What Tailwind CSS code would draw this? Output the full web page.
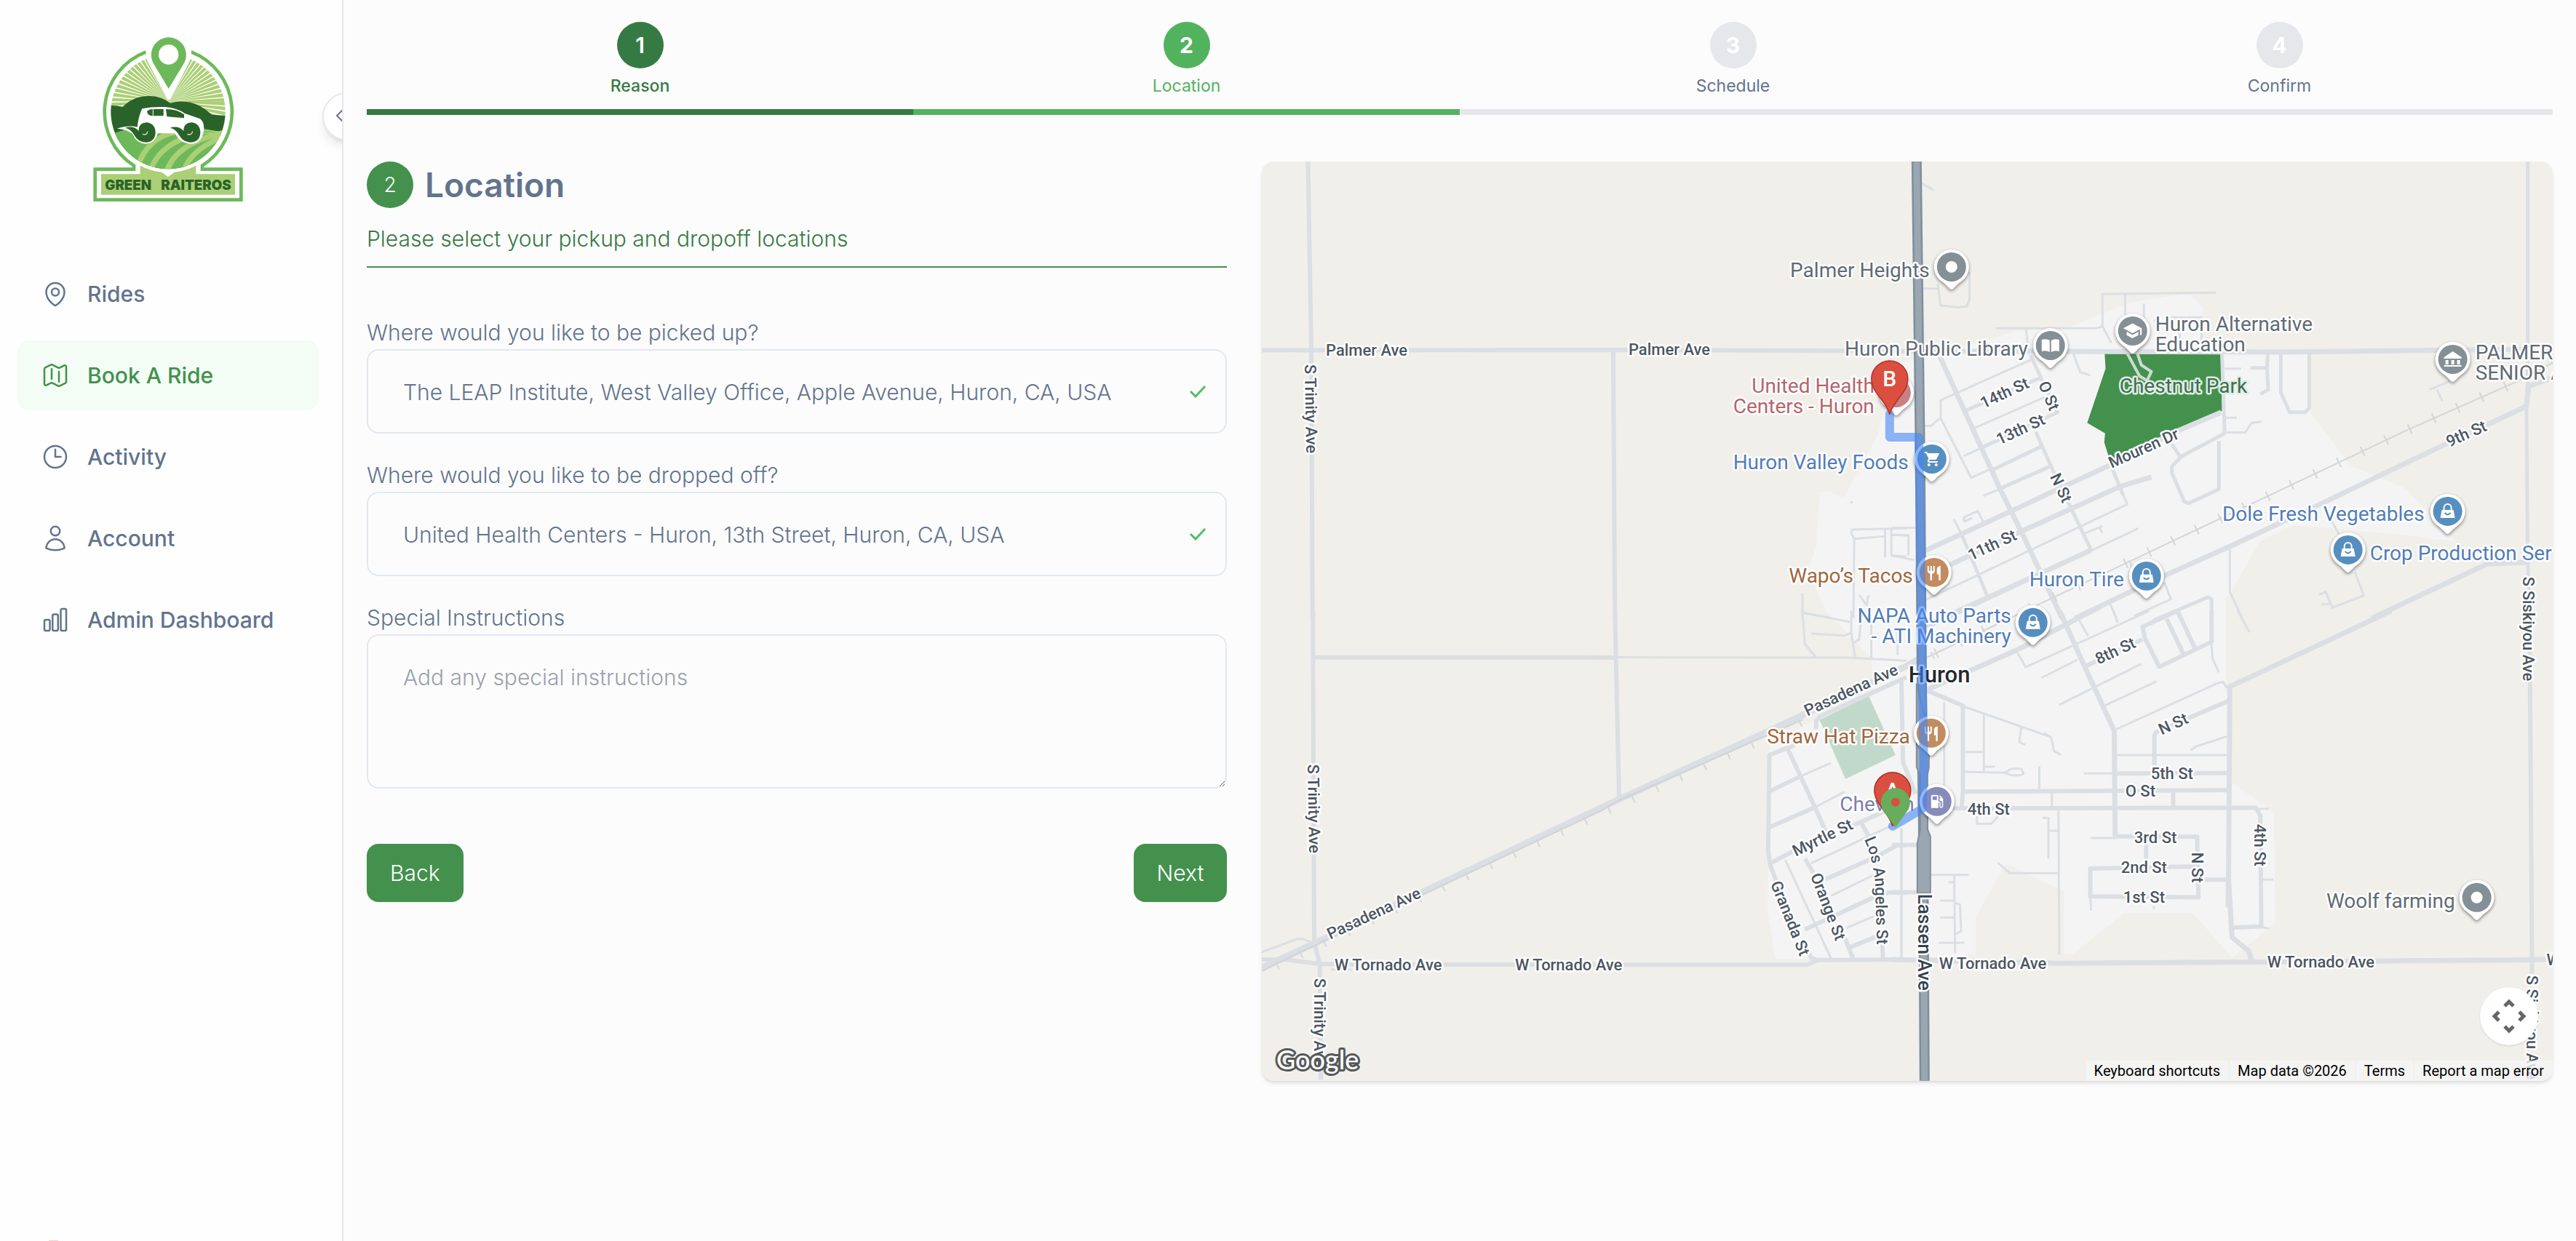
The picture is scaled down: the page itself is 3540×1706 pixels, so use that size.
<!DOCTYPE html>
<html lang="en">
<head>
<meta charset="utf-8">
<meta name="viewport" content="width=device-width, initial-scale=1">
<title>Book A Ride - Green Raiteros</title>
<script src="https://cdn.jsdelivr.net/npm/@tailwindcss/browser@4"></script>
</head>
<body class="flex min-h-screen bg-[#fcfcfc] font-['Inter',sans-serif] text-[30px] text-slate-500">

<aside class="relative flex w-[472px] shrink-0 flex-col overflow-hidden border-r-2 border-[#e5e7eb] bg-[#fefefe]">
  <a href="#" aria-label="Green Raiteros" class="ml-32 mt-[50px] block w-[206px]">
    <svg viewBox="84 60 618 682" class="block w-full">
      <defs>
        <clipPath id="disc"><circle cx="393" cy="371" r="236"/></clipPath>
      </defs>
      <path d="M302 124A264 264 0 0 0 252 593V608H92V734H694V608H534V593A264 264 0 0 0 488 124" fill="none" stroke="#6db95a" stroke-width="14"/>
      <path d="M117 628H278V592L393 600L508 592V628H669V713H117Z" fill="#abcf75"/>
      <path d="M340 600L393 640L446 600Z" fill="#fff"/>
      <circle cx="393" cy="371" r="250" fill="#fff"/>
      <g clip-path="url(#disc)">
        <circle cx="395" cy="330" r="135" fill="none" stroke="#abcf75" stroke-width="270" stroke-dasharray="8.6 3.2"/>
        <path d="M150 345Q185 345 205 351Q250 306 315 306Q365 306 402 335Q480 315 545 360L574 383L640 388V620H150Z" fill="#2a632a"/>
        <path d="M150 470Q240 420 350 459H540L640 470V620H150Z" fill="#6db95a"/>
        <path d="M540 440Q600 450 640 470V500H440Z" fill="#6db95a"/>
        <g fill="none" stroke="#abcf75" stroke-width="22">
          <path d="M270 590Q310 480 420 455"/>
          <path d="M325 600Q370 495 520 462"/>
          <path d="M390 610Q430 500 620 458"/>
          <path d="M460 610Q490 520 640 466"/>
        </g>
        <path d="M540 450Q590 448 625 462M540 460Q580 456 620 462" fill="none" stroke="#abcf75" stroke-width="5"/>
      </g>
      <path d="M302 100V150L390 320H402L488 150V100Z" fill="#fff"/>
      <path fill-rule="evenodd" d="M395 276L332 170A72 72 0 1 1 459 170ZM395 94A41 41 0 1 0 395 176A41 41 0 1 0 395 94Z" fill="#6db95a"/>
      <path d="M266 434Q272 385 286 358Q330 349 380 351Q430 355 462 378L525 400Q544 415 540 450Q532 500 490 503Q455 503 435 480L420 460H350Q338 503 300 503Q262 500 250 468Q235 445 182 440Q235 425 266 434Z" fill="#fff"/>
      <path d="M306 369Q315 360 330 360H374V388H330Q308 388 306 369ZM384 360Q430 360 459 382V397L388 391Z" fill="#2a632a"/>
      <path d="M331 360V388" stroke="#fff" stroke-width="3"/>
      <path id="wheel" d="M216 437Q250 426 272 450Q270 418 305 415Q341 420 341 458Q338 496 300 497Q268 495 254 468Q240 442 216 437Z" fill="#2a632a"/>
      <use href="#wheel" x="185"/>
      <path d="M288 463Q306 470 308 452M472 463Q490 470 494 452" fill="none" stroke="#d6e6d0" stroke-width="4"/>
      <g fill="#2a632a" class="font-['Inter'] text-[56px] font-black">
        <text x="133" y="692">GREEN</text>
        <text x="653" y="692" text-anchor="end">RAITEROS</text>
      </g>
    </svg>
  </a>

  <button type="button" aria-label="Collapse sidebar" class="absolute left-[443px] top-[127px] flex size-[66px] items-center rounded-full border-2 border-gray-200 bg-white pl-4 shadow-lg">
    <svg viewBox="0 0 16 24" class="h-6 w-4 fill-none stroke-slate-500 stroke-2"><path d="M10 3L2 11L10 19"/></svg>
  </button>

  <nav class="mt-[79px] flex flex-col gap-4 px-6 font-medium">
    <a href="#" class="mr-2 flex h-24 items-center gap-6 rounded-2xl px-8">
      <svg viewBox="0 0 24 24" class="size-10 fill-none stroke-current stroke-[1.5]" stroke-linecap="round" stroke-linejoin="round"><path d="M15 10.5a3 3 0 1 1-6 0 3 3 0 0 1 6 0Z"/><path d="M19.5 10.5c0 7.142-7.5 11.25-7.5 11.25S4.5 17.642 4.5 10.5a7.5 7.5 0 1 1 15 0Z"/></svg>
      Rides</a>
    <a href="#" aria-current="page" class="mr-2 flex h-24 items-center gap-6 rounded-2xl bg-[#f3fcf5] px-8 text-[#43914d]">
      <svg viewBox="0 0 24 24" class="size-10 fill-none stroke-current stroke-[1.5]" stroke-linecap="round" stroke-linejoin="round"><path d="M9 6.75V15m6-6v8.25m.503 3.498 4.875-2.437c.381-.19.622-.58.622-1.006V4.82c0-.836-.88-1.38-1.628-1.006l-3.869 1.934c-.317.159-.69.159-1.006 0L9.503 3.252a1.125 1.125 0 0 0-1.006 0L3.622 5.689C3.24 5.88 3 6.27 3 6.695V19.18c0 .836.88 1.38 1.628 1.006l3.869-1.934c.317-.159.69-.159 1.006 0l4.994 2.497c.317.158.69.158 1.006 0Z"/></svg>
      Book A Ride</a>
    <a href="#" class="mr-2 flex h-24 items-center gap-6 rounded-2xl px-8">
      <svg viewBox="0 0 24 24" class="size-10 fill-none stroke-current stroke-[1.5]" stroke-linecap="round" stroke-linejoin="round"><path d="M12 6v6h4.5m4.5 0a9 9 0 1 1-18 0 9 9 0 0 1 18 0Z"/></svg>
      Activity</a>
    <a href="#" class="mr-2 flex h-24 items-center gap-6 rounded-2xl px-8">
      <svg viewBox="0 0 24 24" class="size-10 fill-none stroke-current stroke-[1.5]" stroke-linecap="round" stroke-linejoin="round"><path d="M15.75 6a3.75 3.75 0 1 1-7.5 0 3.75 3.75 0 0 1 7.5 0ZM4.501 20.118a7.5 7.5 0 0 1 14.998 0A17.933 17.933 0 0 1 12 21.75c-2.676 0-5.216-.584-7.499-1.632Z"/></svg>
      Account</a>
    <a href="#" class="mr-2 flex h-24 items-center gap-6 rounded-2xl px-8">
      <svg viewBox="0 0 24 24" class="size-10 fill-none stroke-current stroke-[1.5]" stroke-linecap="round" stroke-linejoin="round"><path d="M3 13.125C3 12.504 3.504 12 4.125 12h2.25c.621 0 1.125.504 1.125 1.125v6.75C7.5 20.496 6.996 21 6.375 21h-2.25A1.125 1.125 0 0 1 3 19.875v-6.75ZM9.75 8.625c0-.621.504-1.125 1.125-1.125h2.25c.621 0 1.125.504 1.125 1.125v11.25c0 .621-.504 1.125-1.125 1.125h-2.25a1.125 1.125 0 0 1-1.125-1.125V8.625ZM16.5 4.125c0-.621.504-1.125 1.125-1.125h2.25C20.496 3 21 3.504 21 4.125v15.75c0 .621-.504 1.125-1.125 1.125h-2.25a1.125 1.125 0 0 1-1.125-1.125V4.125Z"/></svg>
      <span class="whitespace-nowrap">Admin Dashboard</span></a>
  </nav>
  <div class="ml-[67px] mt-auto h-px w-[13px] bg-red-200"></div>
</aside>

<main class="min-w-0 flex-1 px-8 pt-[30px]">
  <ol class="grid grid-cols-4 text-center text-[23px] leading-8">
    <li class="flex flex-col items-center gap-2 border-b-8 border-[#367a43] pb-4 font-medium text-[#367a43]">
      <span class="flex size-16 items-center justify-center rounded-full bg-[#367a43] text-[30px] font-semibold text-white">1</span>Reason</li>
    <li class="flex flex-col items-center gap-2 border-b-8 border-[#52b35f] pb-4 text-[#52b35f]">
      <span class="flex size-16 items-center justify-center rounded-full bg-[#52b35f] text-[30px] font-bold text-white">2</span>Location</li>
    <li class="flex flex-col items-center gap-2 border-b-8 border-gray-200 pb-4">
      <span class="flex size-16 items-center justify-center rounded-full bg-gray-200 text-[30px] font-bold text-white">3</span>Schedule</li>
    <li class="flex flex-col items-center gap-2 border-b-8 border-gray-200 pb-4">
      <span class="flex size-16 items-center justify-center rounded-full bg-gray-200 text-[30px] font-bold text-white">4</span>Confirm</li>
  </ol>

  <div class="mt-16 grid grid-cols-[2fr_3fr] items-start gap-12">
    <form class="min-w-0 font-light leading-[42px]">
      <header class="border-b-2 border-[#43914d] pb-[14px]">
        <div class="flex items-center gap-4">
          <span class="flex size-16 items-center justify-center rounded-full bg-[#43914d] text-[28px] text-white">2</span>
          <h2 class="text-[46px] font-semibold leading-[64px]">Location</h2>
        </div>
        <p class="mt-[18px] leading-[48px] text-[#367a43]">Please select your pickup and dropoff locations</p>
      </header>

      <div class="mt-[68px] flex flex-col gap-9">
        <div class="flex flex-col gap-0.5">
          <label for="pickup">Where would you like to be picked up?</label>
          <div class="relative flex">
            <input id="pickup" type="text" value="The LEAP Institute, West Valley Office, Apple Avenue, Huron, CA, USA" class="h-[116px] w-full rounded-2xl border-2 border-slate-200 bg-transparent pl-12 pr-24 pt-0.5">
            <svg viewBox="0 0 24 18" class="absolute right-7 top-[49px] h-[18px] w-6 fill-none stroke-[#52bf60] stroke-3"><path d="M2 9L9 16L22 2"/></svg>
          </div>
        </div>
        <div class="flex flex-col gap-0.5">
          <label for="dropoff">Where would you like to be dropped off?</label>
          <div class="relative flex">
            <input id="dropoff" type="text" value="United Health Centers - Huron, 13th Street, Huron, CA, USA" class="h-[116px] w-full rounded-2xl border-2 border-slate-200 bg-transparent pl-12 pr-24 pt-0.5">
            <svg viewBox="0 0 24 18" class="absolute right-7 top-[49px] h-[18px] w-6 fill-none stroke-[#52bf60] stroke-3"><path d="M2 9L9 16L22 2"/></svg>
          </div>
        </div>
        <div class="flex flex-col gap-0.5">
          <label for="notes">Special Instructions</label>
          <textarea id="notes" placeholder="Add any special instructions" class="h-[212px] w-full rounded-2xl border-2 border-slate-200 bg-transparent px-12 py-8 leading-[50px] placeholder:text-gray-400"></textarea>
        </div>
      </div>

      <div class="mt-[76px] flex justify-between text-white">
        <button type="button" class="h-20 rounded-2xl bg-[#43914d] px-8">Back</button>
        <button type="submit" class="h-20 rounded-2xl bg-[#43914d] px-8">Next</button>
      </div>
    </form>

    <section aria-label="Map" class="relative min-w-0 overflow-hidden rounded-2xl bg-[#f0efea] shadow-md">
      <svg viewBox="1734 222 1774 1264" preserveAspectRatio="xMidYMid slice" class="block w-full font-['Roboto',sans-serif]">
        <defs>
          <path id="pin" d="M0 31C-3 31-6 25-14 19.5A24 24 0 1 1 14 19.5C6 25 3 31 0 31Z" fill="#fff" class="drop-shadow-[0_2px_2px_rgba(0,0,0,0.45)]"/>
          <g id="bag"><path d="M-8-2H8L10 9H-10Z" fill="#fff"/><path d="M-5-1V-5A5 5 0 0 1 5-5V-1" fill="none" stroke="#fff" stroke-width="2"/><path d="M-4 2Q0 7 4 2" fill="none" stroke="#568fbf" stroke-width="2"/></g>
          <path id="fork" d="M11 9H9V2H7v7H5V2H3v7c0 2.12 1.66 3.84 3.75 3.97V22h2.5v-9.03C11.34 12.84 13 11.12 13 9V2h-2v7zm5-3v8h2.5v8H21V2c-2.76 0-5 2.24-5 4z" fill="#fff"/>
          <path id="marker" d="M0 0C-4-18-25-30-25-49A25 25 0 1 1 25-49C25-30 4-18 0 0Z" fill="#db4f40" stroke="#b0302a" stroke-width="1.5"/>
          <path id="losangeles" d="M2562 1154Q2574 1180 2577 1215L2580 1320"/>
        </defs>

        <!-- built-up area and parks -->
        <path fill="#f4f4f4" d="M2666 488L2768 456L2846 449L2927 416L2996 405H3010L3027 422V482L3172 486L3176 569L3232 641L3307 672L3376 745L3301 735L3151 722L3105 745L3067 813L3059 822V918L3065 1074L3125 1117L3127 1269L3068 1317L3014 1256H2918L2849 1312H2837V1226L2756 1187L2715 1263V1312L2600 1319L2440 1318L2429 1252L2432 1022L2495 990L2575 957L2572 905L2509 840L2492 801L2486 780L2496 751L2501 677L2512 675L2534 684L2581 598L2596 540L2612 498Z"/>
        <g transform="matrix(.59949 0 0 .41454 2600 200)"><path fill="#43914d" d="M488 690L755 688L757 880L650 945L500 1045L487 985L489 955L448 920L490 740Z"/></g>
        <g transform="matrix(.57398 0 0 .43367 1720 840)"><path fill="#c1d9ca" d="M1360 345L1478 270L1542 457L1422 533Z"/></g>

        <!-- north-west -->
        <g transform="matrix(.57398 0 0 .41454 1720 200)" fill="none" stroke="#dbdfe3" stroke-linejoin="round">
          <path vector-effect="non-scaling-stroke" class="stroke-6" d="M135 53L143 680L146 1568M24 679L870 678L1568 682M866 680L870 1568"/>
          <path vector-effect="non-scaling-stroke" class="stroke-3" d="M1437 1180v8M1568 1270L1438 1274L1436 1285L1443 1305L1441 1568M1443 1305L1517 1296M1517 1272V1366M1532 1272V1360L1568 1363M1532 1290L1568 1294M1319 1485V1568M1319 1550L1390 1568M1455 1490L1473 1525L1477 1492"/>
        </g>
        <!-- north-east -->
        <g transform="matrix(.59949 0 0 .41454 2600 200)" fill="none" stroke="#dbdfe3" stroke-linejoin="round">
          <path vector-effect="non-scaling-stroke" class="stroke-3" d="M320 710L112 845V905L182 1102L228 1072M75 930H90L110 905M350 835L185 940M415 685L432 752L455 762M238 606H470L483 600V493L743 488M483 600L503 655M535 490V590M578 525V590M307 606L315 690M66 475H105M105 460L112 530L150 537L172 533L178 510V420M65 123L96 148M763 903h28M768 952h42l15-32l22-4M530 1158L540 1190L70 1512M565 1270L90 1595M440 1288L483 1262M475 1265l8 20M165 1248v-15L197 1213L210 1250M165 1248L185 1235M142 1240L160 1290M0 1268H55M0 1292H38V1360M0 1360L52 1375M545 1375L555 1420M625 1450L640 1505L555 1560M500 1520L515 1568M775 1335V1480L803 1568M1062 1415L1082 1493L1010 1533L995 1480L980 1490M1005 1520L985 1522M1005 1235L1025 1290M1232 810L1280 782M1250 810L1262 848M600 580L640 600M640 570H710V680M660 600V680M763 740h38M250 1138L210 1162M205 1003L165 1030"/>
          <path vector-effect="non-scaling-stroke" class="stroke-5" d="M318 695L345 780L380 885L205 1003M338 772L165 882M330 950L370 1080L410 1200L457 1342M343 998L228 1078M362 1065L248 1138M160 1290L220 1498M757 690L763 955L665 1030L642 1065V1085L670 1180L680 1187L750 1140V980M642 990L660 1030M822 738h38L862 690M860 738L863 810L845 825M892 690V820L912 885H948L957 870V690M505 1070L530 1158M600 1575L725 1498L733 1505V1568M1458 53V780L1455 860L1458 1380L1462 1568"/>
          <path vector-effect="non-scaling-stroke" class="stroke-7" d="M0 682L900 685L1250 679L1458 676M1516 770L1460 798L1455 865L1270 990L960 1205L775 1330L620 1430L420 1568M1460 1382L1365 1388L1100 1568M110 700L165 875L250 1145L300 1290L390 1568M595 1100L525 1130L300 1278L75 1430M755 885L650 950L500 1060L270 1215L75 1345M78 1592L222 1498L457 1342"/>
          <path vector-effect="non-scaling-stroke" class="stroke-2 stroke-[#d4d5d6]" d="M1516 720L1430 785L1180 945L830 1185L350 1513L94 1689L0 1750"/>
          <path vector-effect="non-scaling-stroke" stroke-dasharray="2 34" class="stroke-[14] stroke-[#d4d5d6]" d="M1516 720L1430 785L1180 945L830 1185L350 1513L94 1689"/>
          <path vector-effect="non-scaling-stroke" class="stroke-4 stroke-[#cddbd5]" d="M540 690L568 765L585 780L595 750L572 728L563 690"/>
        </g>
        <!-- south-west -->
        <g transform="matrix(.57398 0 0 .43367 1720 840)" fill="none" stroke="#dbdfe3" stroke-linejoin="round">
          <path vector-effect="non-scaling-stroke" class="stroke-3" d="M24 1082L110 1040H125L150 1055M190 1137h50M870 147L1430 148L1568 158M1319 0L1325 105L1350 145M1320 5L1433 35M1340 72L1420 78L1434 70M1436 0V70L1445 145M1460 20L1455 90L1440 103M1484 20V150M1547 60V140M1310 527L1387 482M1350 622L1420 573M1340 800L1530 682M1388 903L1490 837M1425 1005L1490 968M1278 790L1388 1103M1556 690V1105"/>
          <path vector-effect="non-scaling-stroke" class="stroke-6" d="M147 0V150L150 1050L163 1120L166 1487M147 147L870 148M870 0L880 592M24 1105H80L160 1119L300 1121L1330 1122L1355 1107L1568 1105M1568 210L1360 335L1352 350V375M1300 425L1240 457L1237 760L1242 805L1260 870M1335 1085L1340 1100L1355 1107M1283 435L1350 625L1375 700M1242 800L1300 760M1240 572L1310 527M1240 686L1350 622M1460 672L1480 720M1440 680L1500 645L1568 600M1325 785L1345 830M1375 850L1495 780L1545 743H1568M1325 1010L1490 908L1525 893H1568M1420 1035L1440 1100M1510 1050L1512 1105M1430 1068L1495 1033M1556 220L1560 480L1590 580"/>
          <path vector-effect="non-scaling-stroke" class="stroke-9" d="M24 1132L75 1100L160 1048L880 597L1240 380L1568 175L1600 150"/>
          <path vector-effect="non-scaling-stroke" class="stroke-2 stroke-[#d0d3d7]" d="M24 1142L160 1055L420 893L835 635L880 600L1320 345"/>
          <path vector-effect="non-scaling-stroke" stroke-dasharray="2 34" class="stroke-[12] stroke-[#d4d7da]" d="M60 1125L160 1061L420 900L835 643L1320 350"/>
        </g>
        <!-- south-east -->
        <g transform="matrix(.59949 0 0 .43367 2600 840)" fill="none" stroke="#dbdfe3" stroke-linejoin="round">
          <path vector-effect="non-scaling-stroke" class="stroke-3" d="M733 98L735 150L750 195M793 0L820 67M440 515H512M515 457H768M685 442L697 430L768 398M510 378L745 230L760 225L768 245M485 302L607 223M383 298L572 168M343 212L425 155M285 125L307 178L590 0M450 80L430 30M518 38L508 0M165 303L365 400L372 445L388 457M348 387l17 13M297 370L292 415L306 425M211 328V510M165 447H211M165 510L258 513L275 500H297L302 515L295 521H275L258 513M211 494h25M338 492V565M120 290V575M367 573V625M382 632L384 1090M345 656h14V785M359 697H383M195 650V675H228L243 652M243 798L270 831H383M88 837H176M143 837L145 1085M130 860h13M110 918h33M110 972h33M143 925L156 930L159 1015L143 1028M108 1052h58M456 720H512M455 905L457 950M601 935v12M768 850V940M847 852h28M847 1002l18 5M842 627h22M90 130L97 152M22 690V1105"/>
          <path vector-effect="non-scaling-stroke" class="stroke-6" d="M140 626L770 624H835L845 650L847 1000L780 1004M165 573L770 568M772 285L605 385L602 395V490M512 715L700 716L703 908L455 905V817L700 810M583 735V790M700 852H770M515 515L770 514M645 570V625M80 252L163 300V570L160 625M440 178L575 90M580 85L613 177L733 98V0M580 85L575 50L655 0M630 25L668 135M655 0L695 118M0 742H60M0 892H60M1462 0L1468 1150"/>
          <path vector-effect="non-scaling-stroke" class="stroke-7" d="M1145 0L775 240L772 850L780 1035L818 1078L825 1110M385 0L440 170L510 380L512 715M80 250L285 125L480 -15M0 1105L90 1108L380 1117L850 1113L1468 1106L1516 1104"/>
        </g>

        <!-- Lassen Ave highway -->
        <path d="M2634 222L2639 630L2640 780L2642 1060L2643 1130L2645 1486" fill="none" stroke="#7e8e9d" stroke-width="14"/>
        <path d="M2634 222L2639 630L2640 780L2642 1060L2643 1130L2645 1486" fill="none" stroke="#9aa6b1" stroke-width="9"/>
        <path d="M2634 940V1055L2639 1065V1140L2635 1160V1228H2653V1150L2649 1140V1065L2651 1055V1010Z" fill="#9aa6b1" stroke="#7e8e9d" stroke-width="2"/>

        <!-- street names -->
        <g class="fill-[#4c5663] stroke-white stroke-[5] text-[22px] font-medium" paint-order="stroke" stroke-linejoin="round">
          <text x="1822" y="489">Palmer Ave</text>
          <text x="2238" y="488">Palmer Ave</text>
          <text transform="translate(1793 501) rotate(89)">S Trinity Ave</text>
          <text transform="translate(1797 1051) rotate(89)">S Trinity Ave</text>
          <text transform="translate(1806 1345) rotate(90)">S Trinity Ave</text>
          <text transform="translate(2484 985) rotate(-25)">Pasadena Ave</text>
          <text transform="translate(1828 1292) rotate(-25)">Pasadena Ave</text>
          <text x="1834" y="1334">W Tornado Ave</text>
          <text x="2082" y="1334">W Tornado Ave</text>
          <text x="2665" y="1332">W Tornado Ave</text>
          <text x="3116" y="1330">W Tornado Ave</text>
          <text x="3500" y="1327">W Tornado Ave</text>
          <text transform="translate(2468 1178) rotate(-26)">Myrtle St</text>
          <text><textPath href="#losangeles">Los Angeles St</textPath></text>
          <text transform="translate(2488 1204) rotate(69)">Orange St</text>
          <text transform="translate(2433 1215) rotate(68)">Granada St</text>
          <text transform="translate(2726 562) rotate(-25)">14th St</text>
          <text transform="translate(2748 612) rotate(-25)">13th St</text>
          <text transform="translate(2709 771) rotate(-25)">11th St</text>
          <text transform="translate(2884 914) rotate(-25)">8th St</text>
          <text transform="translate(2902 644) rotate(-24)">Mouren Dr</text>
          <text transform="translate(3366 615) rotate(-24)">9th St</text>
          <text transform="translate(2801 528) rotate(67)">O St</text>
          <text transform="translate(2817 655) rotate(65)">N St</text>
          <text transform="translate(2971 1011) rotate(-25)">N St</text>
          <text x="2956" y="1071">5th St</text>
          <text x="2921" y="1095">O St</text>
          <text x="2704" y="1120">4th St</text>
          <text x="2933" y="1159">3rd St</text>
          <text x="2915" y="1200">2nd St</text>
          <text x="2918" y="1241">1st St</text>
          <text transform="translate(3012 1172) rotate(90)">N St</text>
          <text transform="translate(3098 1133) rotate(90)">4th St</text>
          <text transform="translate(3467 793) rotate(90)">S Siskiyou Ave</text>
          <text transform="translate(3472 1341) rotate(90)">S Siskiyou Ave</text>
        </g>
        <text transform="translate(2636 1229) rotate(90)" class="fill-[#35424f] stroke-white stroke-[5] text-[26px] font-medium" paint-order="stroke">Lassen Ave</text>

        <!-- place names -->
        <g class="stroke-white stroke-[5] text-[28px]" paint-order="stroke" stroke-linejoin="round">
          <g class="fill-[#5f6b75]">
            <text x="2652" y="381" text-anchor="end">Palmer Heights</text>
            <text x="2787" y="489" text-anchor="end">Huron Public Library</text>
            <text x="2962" y="455">Huron Alternative</text>
            <text x="2962" y="483">Education</text>
            <text x="3402" y="494">PALMER</text>
            <text x="3402" y="522">SENIOR A</text>
            <text x="3374" y="1248" text-anchor="end">Woolf farming</text>
          </g>
          <text x="2913" y="540" class="fill-[#3f6d53] stroke-[#dfeee3]">Chestnut Park</text>
          <g text-anchor="end">
            <g class="fill-[#b5666d]"><text x="2576" y="540">United Health</text><text x="2576" y="568">Centers - Huron</text></g>
            <g class="fill-[#527db8]">
              <text x="2623" y="645">Huron Valley Foods</text>
              <text x="2764" y="856">NAPA Auto Parts</text>
              <text x="2764" y="884">- ATI Machinery</text>
              <text x="2919" y="806">Huron Tire</text>
              <text x="3332" y="716">Dole Fresh Vegetables</text>
              <text x="3257" y="770" text-anchor="start">Crop Production Ser</text>
            </g>
            <g class="fill-[#a0673c]"><text x="2629" y="801">Wapo’s Tacos</text><text x="2625" y="1022">Straw Hat Pizza</text></g>
            <text x="2631" y="1115" class="fill-[#7a80ad]">Chevron</text>
          </g>
          <text x="2623" y="938" class="fill-[#26292d] text-[31px] font-medium">Huron</text>
        </g>

        <!-- place pins -->
        <g transform="translate(2682 367)"><use href="#pin"/><circle r="20" fill="#848f96"/><circle r="8" fill="#fff"/></g>
        <g transform="translate(2818 475)"><use href="#pin"/><circle r="20" fill="#848f96"/><path d="M-12-8Q-6-10-1-7V9Q-6 6-12 8ZM12-8Q6-10 1-7V9Q6 6 12 8Z" fill="#fff"/></g>
        <g transform="translate(2931 455)"><use href="#pin"/><circle r="20" fill="#848f96"/><path transform="translate(-14 -14) scale(1.15)" d="M5 13.18v4L12 21l7-3.82v-4L12 17l-7-3.82zM12 3L1 9l11 6 9-4.91V17h2V9L12 3z" fill="#fff"/></g>
        <g transform="translate(3371 494)"><use href="#pin"/><circle r="20" fill="#848f96"/><path d="M-12-3L0-11L12-3V-1H-12ZM-10 1H-6V7H-10ZM-2 1H2V7H-2ZM6 1H10V7H6ZM-12 8H12V10H-12Z" fill="#fff"/></g>
        <g transform="translate(3404 1234)"><use href="#pin"/><circle r="20" fill="#848f96"/><circle r="8" fill="#fff"/></g>
        <g transform="translate(2606 540)"><use href="#pin"/><circle r="20" fill="#c98084"/></g>
        <g transform="translate(2655 631)"><use href="#pin"/><circle r="20" fill="#568fbf"/><path transform="translate(-11 -12)" d="M7 18c-1.1 0-1.99.9-1.99 2S5.9 22 7 22s2-.9 2-2-.9-2-2-2zM1 2v2h2l3.6 7.59-1.35 2.45c-.16.28-.25.61-.25.96 0 1.1.9 2 2 2h12v-2H7.42c-.14 0-.25-.11-.25-.25l.03-.12.9-1.63h7.45c.75 0 1.41-.41 1.75-1.03l3.58-6.49c.08-.14.12-.31.12-.48 0-.55-.45-1-1-1H5.21l-.94-2H1zm16 16c-1.1 0-1.99.9-1.99 2s.89 2 1.99 2 2-.9 2-2-.9-2-2-2z" fill="#fff"/></g>
        <g transform="translate(2658 787)"><use href="#pin"/><circle r="20" fill="#c28c60"/><use href="#fork" x="-12" y="-11"/></g>
        <g transform="translate(2654 1008)"><use href="#pin"/><circle r="20" fill="#c28c60"/><use href="#fork" x="-12" y="-11"/></g>
        <g transform="translate(2950 792)"><use href="#pin"/><circle r="20" fill="#568fbf"/><use href="#bag"/></g>
        <g transform="translate(2794 856)"><use href="#pin"/><circle r="20" fill="#568fbf"/><use href="#bag"/></g>
        <g transform="translate(3364 703)"><use href="#pin"/><circle r="20" fill="#568fbf"/><use href="#bag"/></g>
        <g transform="translate(3227 756)"><use href="#pin"/><circle r="20" fill="#568fbf"/><use href="#bag"/></g>
        <g transform="translate(2662 1102)"><use href="#pin"/><circle r="20" fill="#868bb8"/><path transform="translate(-12 -12)" d="M19.77 7.23l.01-.01-3.72-3.72L15 4.56l2.11 2.11c-.94.36-1.61 1.26-1.61 2.33 0 1.38 1.12 2.5 2.5 2.5.36 0 .69-.08 1-.21v7.21c0 .55-.45 1-1 1s-1-.45-1-1V14c0-1.1-.9-2-2-2h-1V5c0-1.1-.9-2-2-2H6c-1.1 0-2 .9-2 2v16h10v-7.5h1.5v5c0 1.38 1.12 2.5 2.5 2.5s2.5-1.12 2.5-2.5V9c0-.69-.28-1.32-.73-1.77zM12 10H6V5h6v5z" fill="#fff"/></g>

        <!-- route and its end markers -->
        <path d="M2597 569V601H2637L2640 780L2642 937L2644 1050L2642 1112L2601 1136" fill="none" stroke="#4285f4" stroke-opacity=".6" stroke-width="12" stroke-linecap="round" stroke-linejoin="round"/>
        <use href="#marker" x="2597" y="570"/>
        <text x="2597" y="531" text-anchor="middle" class="fill-white text-[30px] font-medium">B</text>
        <use href="#marker" x="2601" y="1136"/>
        <text x="2601" y="1097" text-anchor="middle" class="fill-white text-[30px] font-medium">A</text>
        <path d="M2605 1138L2588 1114A20 20 0 1 1 2622 1114Z" fill="#67ad5b"/>
        <circle cx="2605" cy="1103" r="6" fill="#db4f40"/>
        <text x="1754" y="1470" paint-order="stroke" stroke-linejoin="round" class="fill-white stroke-[#55585a] stroke-[6] font-['Lato'] text-[36px] font-medium">Google</text>
      </svg>

      <button type="button" aria-label="Map camera controls" class="absolute bottom-[49px] right-5 flex size-20 items-center justify-center rounded-full bg-white shadow">
        <svg viewBox="-24 -24 48 48" class="size-12 fill-none stroke-[#666] stroke-5"><path d="M-6-14L0-20L6-14M-6 14L0 20L6 14M-14-6L-20 0L-14 6M14-6L20 0L14 6"/></svg>
      </button>
      <div class="absolute bottom-0 right-0 flex h-7 divide-x-2 divide-[#f0efea] bg-[#f5f5f5]/80 pr-px font-['Roboto',sans-serif] text-[20px] leading-7 text-black">
        <button type="button" class="px-[11px]">Keyboard shortcuts</button>
        <span class="px-[11px]">Map data ©2026</span>
        <a href="#" class="px-[11px]">Terms</a>
        <a href="#" class="px-[11px]">Report a map error</a>
      </div>
    </section>
  </div>
</main>
</body>
</html>
